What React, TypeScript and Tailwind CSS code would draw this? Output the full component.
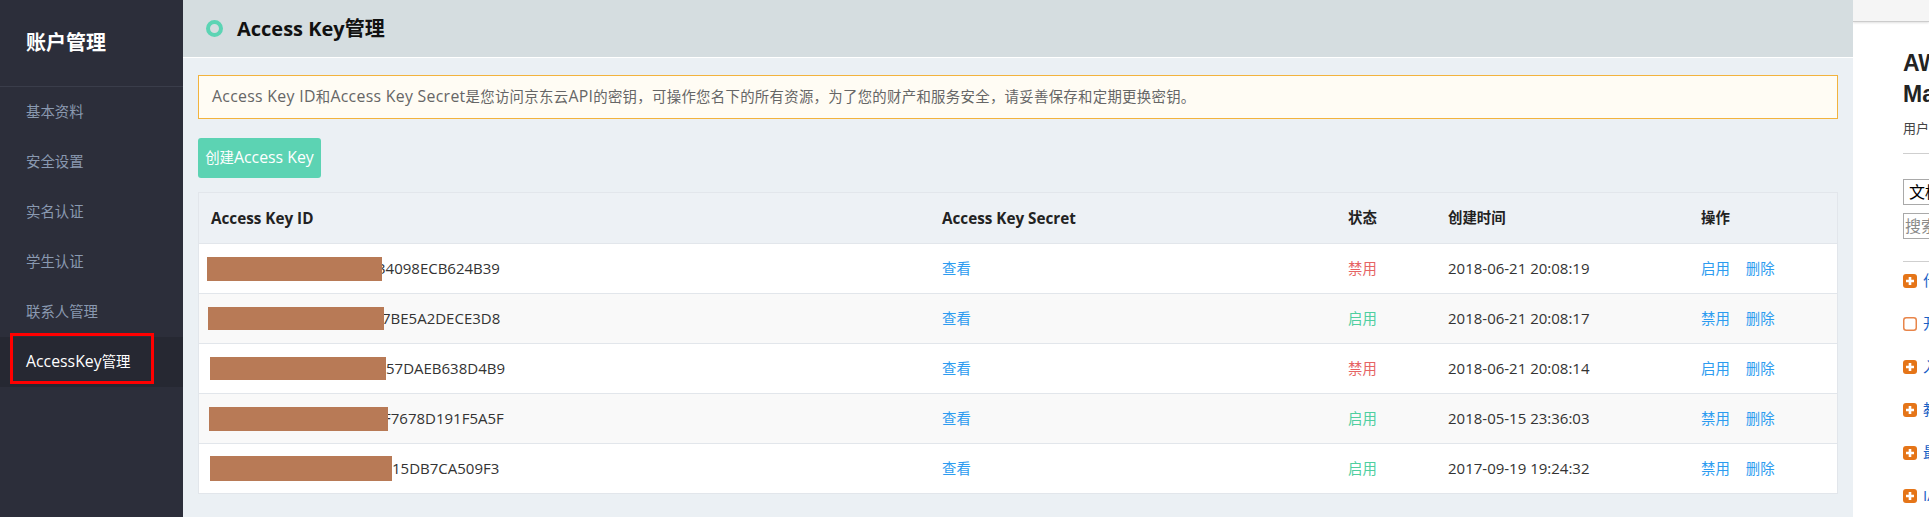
import React from 'react';

const font = "font-['Open_Sans','Noto_Sans_CJK_SC',sans-serif]";

const menu = ['基本资料', '安全设置', '实名认证', '学生认证', '联系人管理'];

const keys = [
  { mask: 'ml-[8px] w-[175px] h-[24px]', textCls: 'ml-[-5px]', id: '34098ECB624B39', on: false, time: '2018-06-21 20:08:19' },
  { mask: 'ml-[9px] w-[176px] h-[23px]', textCls: 'ml-[-2px]', id: '7BE5A2DECE3D8', on: true, time: '2018-06-21 20:08:17' },
  { mask: 'ml-[11px] w-[176px] h-[23px]', textCls: 'ml-0', id: '57DAEB638D4B9', on: false, time: '2018-06-21 20:08:14' },
  { mask: 'ml-[10px] w-[179px] h-[24px]', textCls: 'ml-[-5px]', id: 'F7678D191F5A5F', on: true, time: '2018-05-15 23:36:03' },
  { mask: 'ml-[11px] w-[182px] h-[25px]', textCls: 'ml-0', id: '15DB7CA509F3', on: true, time: '2017-09-19 19:24:32' },
];

const cols = 'grid grid-cols-[730px_406px_100px_253px_151px]';

// latin runs render a bit larger than the CJK around them
function L({ children, sm }: { children: React.ReactNode; sm?: boolean }) {
  return <span className={sm ? 'text-[1.06em]' : 'text-[1.1em]'}>{children}</span>;
}

function PlusIcon({ empty }: { empty?: boolean }) {
  if (empty) {
    return (
      <svg width="14" height="14" viewBox="0 0 14 14" className="shrink-0">
        <rect x="0.75" y="0.75" width="12.5" height="12.5" rx="2.5" fill="white" stroke="#e8854a" strokeWidth="1.5" />
      </svg>
    );
  }
  return (
    <svg width="14" height="14" viewBox="0 0 14 14" className="shrink-0">
      <rect x="0" y="0" width="14" height="14" rx="3" fill="#e57518" />
      <path d="M7 3v8M3 7h8" stroke="white" strokeWidth="2.6" />
    </svg>
  );
}

function Sidebar() {
  return (
    <aside className="w-[183px] shrink-0 bg-[#2c2e3a] h-full">
      <div className="h-[87px] flex items-center px-[26px] border-b border-[#3a3d4a]">
        <span className="text-white text-[20px] font-bold">账户管理</span>
      </div>
      <nav className="flex flex-col text-[14.4px]">
        {menu.map((m) => (
          <div key={m} className="h-[50px] flex items-center px-[26px] text-[#8a99b0]">
            {m}
          </div>
        ))}
        <div className="relative h-[50px] flex items-center px-[26px] bg-[#262832] text-white">
          <L>AccessKey</L>管理
          <span className="absolute left-[10px] top-[-4px] w-[144px] h-[51px] border-[3px] border-[#ff0000]" />
        </div>
      </nav>
    </aside>
  );
}

function KeyTable() {
  return (
    <div className="border border-[#e2e6eb] text-[14.4px] text-[#333]">
      <div className={`${cols} h-[50px] items-center bg-[#edf1f5] font-bold text-[#222]`}>
        <div className="pl-[12px]"><L sm>Access Key ID</L></div>
        <div className="pl-[13px]"><L sm>Access Key Secret</L></div>
        <div className="pl-[13px]">状态</div>
        <div className="pl-[13px]">创建时间</div>
        <div className="pl-[13px]">操作</div>
      </div>
      {keys.map((k, i) => (
        <div
          key={k.id}
          className={`${cols} h-[50px] items-center border-t border-[#e2e6eb] ${i % 2 === 1 ? 'bg-[#f9f9f9]' : 'bg-white'}`}
        >
          <div className="flex items-center">
            <span className={`relative z-10 bg-[#b87a56] ${k.mask}`} />
            <span className={`text-[15px] ${k.textCls}`}>{k.id}</span>
          </div>
          <div className="pl-[13px] text-[#2d9cf0]">查看</div>
          <div className={k.on ? 'pl-[13px] text-[#4fcfa0]' : 'pl-[13px] text-[#e66464]'}>{k.on ? '启用' : '禁用'}</div>
          <div className="pl-[13px] text-[15px]">{k.time}</div>
          <div className="pl-[13px] flex gap-[16px] text-[#2d9cf0]">
            <span>{k.on ? '禁用' : '启用'}</span>
            <span>删除</span>
          </div>
        </div>
      ))}
    </div>
  );
}

function RightPanel() {
  const items = [
    { t: '什么是 IAM？' },
    { t: '开始使用', empty: true },
    { t: '入门' },
    { t: '教程' },
    { t: '最佳实践' },
    { t: 'IAM 用户指南' },
  ];
  return (
    <aside className="w-[76px] shrink-0 h-full bg-white overflow-hidden">
      <div className="h-[22px] bg-[#f5f5f5] border-b border-[#cccccc] shadow-[0_1px_2px_rgba(0,0,0,0.12)]" />
      <div className="w-[360px] pl-[50px]">
        <div className="mt-[26px] text-[23px] leading-[31px] font-bold text-[#232323] font-['Liberation_Sans',sans-serif]">
          <div>AWS Identity and Access</div>
          <div>Management</div>
        </div>
        <div className="mt-[10px] text-[13px] leading-[16px] text-[#444]">用户指南</div>
        <div className="mt-[17px] border-t border-[#cfcfcf]" />
        <div className="mt-[25px] h-[26px] w-[200px] border border-[#a9a9a9] flex items-center pl-[5px] text-[16px] text-black">文档</div>
        <div className="mt-[8px] h-[26px] w-[200px] border border-[#a9a9a9] flex items-center pl-[1px] text-[16px] text-[#8a8a8a]">搜索</div>
        <div className="mt-[22px] border-t border-[#cfcfcf]" />
        <div className="flex flex-col">
          {items.map((it, i) => (
            <div key={i} className={`flex items-center gap-[6px] h-[43px] text-[15px] text-[#1a62c6] ${i === 0 ? 'mt-[-3px]' : ''}`}>
              <PlusIcon empty={it.empty} />
              <span>{it.t}</span>
            </div>
          ))}
        </div>
      </div>
    </aside>
  );
}

export default function App() {
  return (
    <div className={`${font} w-[1929px] h-[517px] flex overflow-hidden`}>
      <Sidebar />
      <main className="flex-1 min-w-0 bg-[#ebf0f4] h-full">
        <header className="h-[58px] bg-[#d5dde0] border-b border-white flex items-center pl-[23px]">
          <span className="w-[17px] h-[17px] rounded-full border-[4px] border-[#5cd4b4]" />
          <h1 className="ml-[14px] text-[20px] font-bold text-[#111]">Access Key管理</h1>
        </header>
        <div className="px-[15px] pt-[17px]">
          <div className="h-[44px] border border-[#f2b33d] bg-[#fffcf4] flex items-center pl-[13px] text-[14.4px] text-[#666] tracking-[0.3px]">
            <span>
              <L>Access Key ID</L>和<L>Access Key Secret</L>是您访问京东云<L>API</L>的密钥，可操作您名下的所有资源，为了您的财产和服务安全，请妥善保存和定期更换密钥。
            </span>
          </div>
          <button className="mt-[19px] w-[123px] h-[40px] rounded-[3px] bg-[#5cd3b3] text-white text-[14.4px] flex items-center justify-center">
            创建<L>Access Key</L>
          </button>
          <div className="mt-[14px]">
            <KeyTable />
          </div>
        </div>
      </main>
      <RightPanel />
    </div>
  );
}
